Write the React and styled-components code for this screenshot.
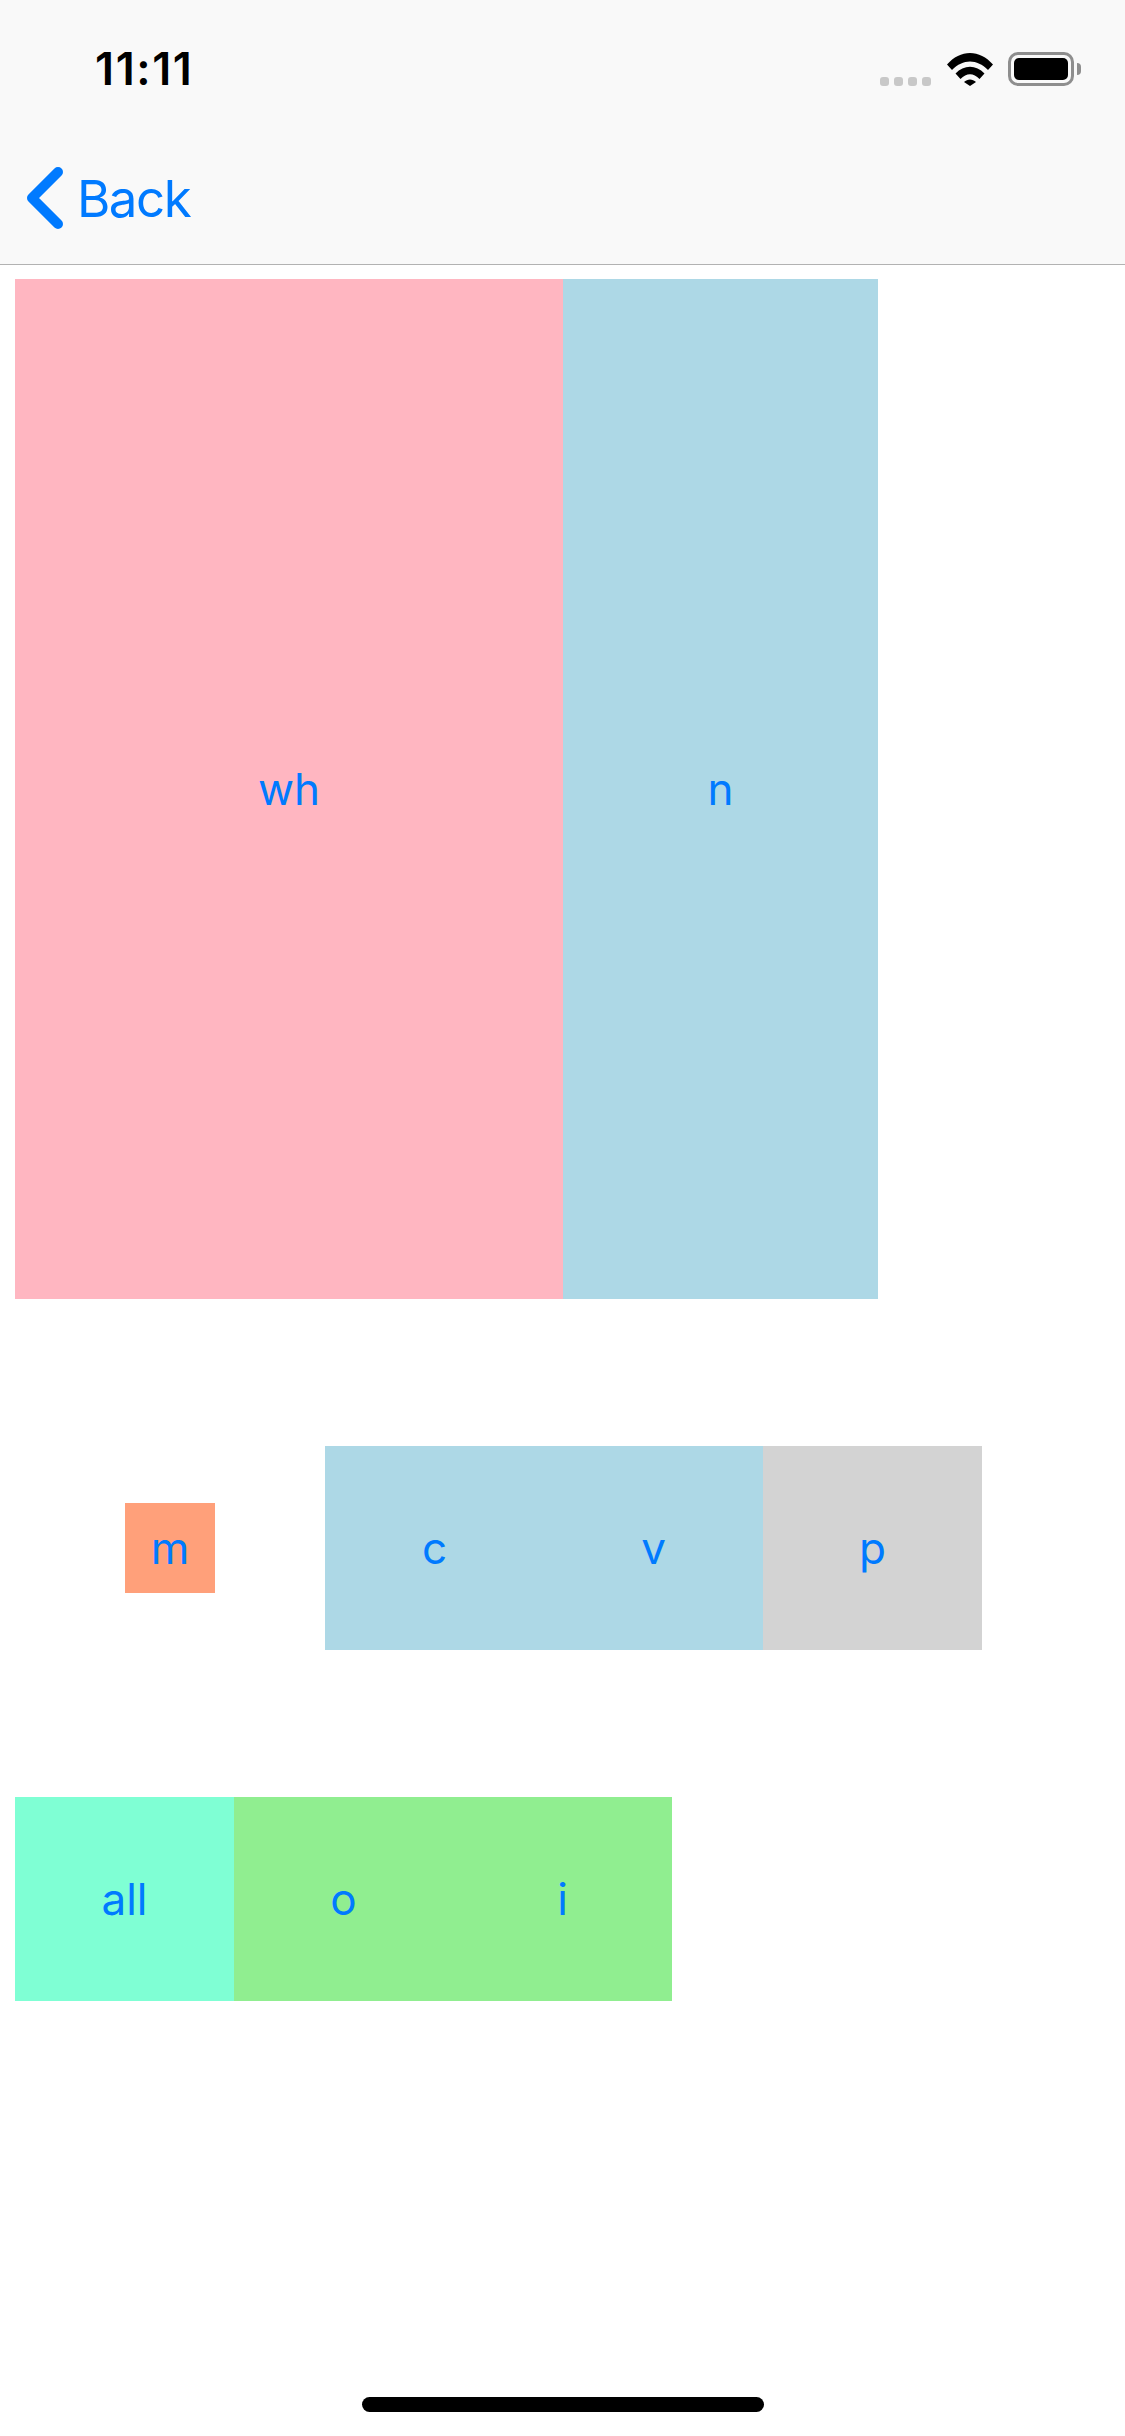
import React from 'react'
import styled, { createGlobalStyle } from 'styled-components'

const GlobalStyle = createGlobalStyle`
  html, body {
    margin: 0;
    padding: 0;
    background: #fff;
  }
`

const Screen = styled.div`
  position: relative;
  width: 1125px;
  height: 2436px;
  overflow: hidden;
  background: #fff;
  font-family: Inter, Roboto, "Liberation Sans", sans-serif;
`

const Header = styled.header`
  height: 264px;
  background: #f9f9f9;
  border-bottom: 1px solid #b2b2b2;
`

const StatusBar = styled.div`
  height: 132px;
  padding: 0 51px 0 95px;
  box-sizing: border-box;
  display: flex;
  align-items: center;
  justify-content: space-between;
`

const Time = styled.span`
  font-size: 45px;
  font-weight: 600;
  letter-spacing: 1.6px;
  color: #000;
  margin-top: 5px;
`

const StatusIcons = styled.div`
  display: flex;
  align-items: center;
  margin-top: 6px;
`

const Dots = styled.div`
  display: flex;
  gap: 5px;
  margin: 24px 16px 0 0;
`

const Dot = styled.span`
  width: 9px;
  height: 9px;
  border-radius: 3px;
  background: #c8c8c8;
`

const Battery = styled.div`
  width: 66px;
  height: 34px;
  box-sizing: border-box;
  margin-left: 15px;
  padding: 3px;
  border: 3px solid #8e8e8e;
  border-radius: 10px;
  position: relative;
  &::after {
    content: '';
    position: absolute;
    left: 66px;
    top: 8px;
    width: 4px;
    height: 12px;
    background: #8e8e8e;
    border-radius: 0 4px 4px 0;
  }
`

const BatteryFill = styled.div`
  height: 100%;
  background: #000;
  border-radius: 5px;
`

const NavBar = styled.nav`
  height: 132px;
  display: flex;
  align-items: center;
  padding-left: 26px;
  color: #007aff;
`

const BackLabel = styled.span`
  font-size: 51px;
  margin-left: 13px;
  letter-spacing: -1.5px;
`

const Content = styled.main`
  padding: 14px 0 0 15px;
  display: flex;
  flex-direction: column;
  gap: 147px;
`

const Row = styled.div`
  display: flex;
  align-items: center;
`

const Cell = styled.div`
  width: ${props => props.$w}px;
  height: ${props => props.$h || 204}px;
  background: ${props => props.$bg || 'transparent'};
  color: #007aff;
  font-size: 44px;
  display: flex;
  align-items: center;
  justify-content: center;
`

const Group = styled.div`
  display: flex;
  background: ${props => props.$bg};
`

const Spacer = styled.div`
  width: 310px;
  display: flex;
  justify-content: center;
`

const HomeIndicator = styled.div`
  position: absolute;
  left: 362px;
  top: 2397px;
  width: 402px;
  height: 15px;
  border-radius: 8px;
  background: #000;
`

const App = () => {
  return (
    <Screen>
      <GlobalStyle />
      <Header>
        <StatusBar>
          <Time>11:11</Time>
          <StatusIcons>
            <Dots>
              <Dot /><Dot /><Dot /><Dot />
            </Dots>
            <svg width="46" height="34" viewBox="0 0 46 34">
              <path d="M0 12.5C13 -3 33 -3 46 12.5L41 18C30 6.5 16 6.5 5 18Z" fill="#000" />
              <path d="M8.5 21.5C17 12.5 29 12.5 37.5 21.5L32.5 27C26.5 20.5 19.5 20.5 13.5 27Z" fill="#000" />
              <path d="M17 30C20.5 26.5 25.5 26.5 29 30L23 34Z" fill="#000" />
            </svg>
            <Battery>
              <BatteryFill />
            </Battery>
          </StatusIcons>
        </StatusBar>
        <NavBar>
          <svg width="38" height="64" viewBox="0 0 38 64">
            <path d="M32 6L6 32L32 58" fill="none" stroke="#007aff" strokeWidth="10" strokeLinecap="round" strokeLinejoin="round" />
          </svg>
          <BackLabel>Back</BackLabel>
        </NavBar>
      </Header>
      <Content>
        <Row>
          <Cell $w={548} $h={1020} $bg="#ffb6c1">wh</Cell>
          <Cell $w={315} $h={1020} $bg="#add8e6">n</Cell>
        </Row>
        <Row>
          <Spacer>
            <Cell $w={90} $h={90} $bg="#ffa07a">m</Cell>
          </Spacer>
          <Group $bg="#add8e6">
            <Cell $w={219}>c</Cell>
            <Cell $w={219}>v</Cell>
          </Group>
          <Cell $w={219} $bg="#d3d3d3">p</Cell>
        </Row>
        <Row>
          <Cell $w={219} $bg="#7fffd4">all</Cell>
          <Group $bg="#90ee90">
            <Cell $w={219}>o</Cell>
            <Cell $w={219}>i</Cell>
          </Group>
        </Row>
      </Content>
      <HomeIndicator />
    </Screen>
  )
}

export default App
